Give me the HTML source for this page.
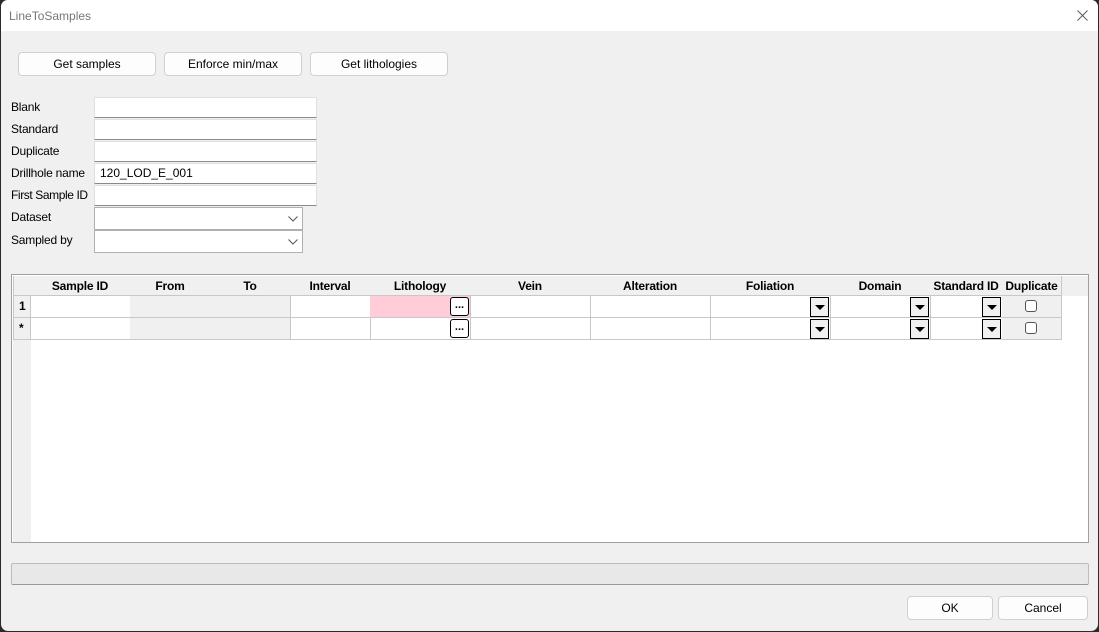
<!DOCTYPE html>
<html><head><meta charset="utf-8"><style>
*{box-sizing:border-box;margin:0;padding:0}
body{width:1099px;height:632px;background:#2b2b2b;font-family:"Liberation Sans",sans-serif;font-size:12px;color:#000;position:relative;overflow:hidden}
.win{position:absolute;left:1px;top:0;width:1097px;height:631px;background:#f0f0f0;border-radius:7px;overflow:hidden}
.title{position:absolute;left:0;top:0;width:100%;height:31px;background:#fff}
.a{position:absolute}
.btn{position:absolute;background:#fdfdfd;border:1px solid #d0d0d0;border-radius:4px;text-align:center;line-height:22px;font-size:12px}
.lbl{position:absolute;left:10px;font-size:12px;letter-spacing:-0.2px}
.inp{position:absolute;left:93px;width:223px;height:21px;background:#fff;border:1px solid #e0e0e0;border-bottom:1px solid #8a8a8a;padding-left:5px;line-height:19px}
.cmb{position:absolute;left:93px;width:209px;height:23px;background:#fff;border:1px solid #b0b0b0}
.cmb svg{position:absolute;right:4px;top:8px}
.c{position:absolute;border-right:1px solid #c8c8c8;border-bottom:1px solid #c8c8c8;height:22px}
.h{position:absolute;top:276px;height:20px;border-right:1px solid #c8c8c8;border-bottom:1px solid #c8c8c8;background:#f0f0f0;font-weight:bold;text-align:center;line-height:20px;font-size:12px;letter-spacing:-0.2px}
.dd{position:absolute;width:19px;height:20px;border:1px solid #000;background:#f0f0f0}
.dd:after{content:"";position:absolute;left:4px;top:7px;border-left:5px solid transparent;border-right:5px solid transparent;border-top:5px solid #000}
.el{position:absolute;width:19px;height:19px;border:1px solid #000;border-radius:3px;background:#fff;font-size:11px;font-weight:bold;text-align:center;line-height:15px}
.cb{position:absolute;width:12px;height:12px;border:1px solid #555;border-radius:3px;background:#fff}
</style></head><body>
<div class="win">
<div class="title"></div>
<div class="a" style="left:8px;top:9px;color:#777;font-size:12px">LineToSamples</div>
<svg class="a" style="left:1076px;top:10px" width="11" height="11"><path d="M0.5 0.5L10.5 10.5M10.5 0.5L0.5 10.5" stroke="#555" stroke-width="0.9"/></svg>

<div class="btn" style="left:17px;top:52px;width:138px;height:24px">Get samples</div>
<div class="btn" style="left:163px;top:52px;width:138px;height:24px">Enforce min/max</div>
<div class="btn" style="left:309px;top:52px;width:138px;height:24px">Get lithologies</div>

<div class="lbl" style="top:100px">Blank</div>
<div class="lbl" style="top:122px">Standard</div>
<div class="lbl" style="top:144px">Duplicate</div>
<div class="lbl" style="top:166px">Drillhole name</div>
<div class="lbl" style="top:188px;letter-spacing:-0.4px">First Sample ID</div>
<div class="lbl" style="top:210px">Dataset</div>
<div class="lbl" style="top:233px">Sampled by</div>
<div class="inp" style="top:97px"></div>
<div class="inp" style="top:119px"></div>
<div class="inp" style="top:141px"></div>
<div class="inp" style="top:163px">120_LOD_E_001</div>
<div class="inp" style="top:185px"></div>
<div class="cmb" style="top:207px"><svg width="10" height="6"><path d="M0.5 0.5L5 5L9.5 0.5" stroke="#555" fill="none"/></svg></div>
<div class="cmb" style="top:230px"><svg width="10" height="6"><path d="M0.5 0.5L5 5L9.5 0.5" stroke="#555" fill="none"/></svg></div>

<div class="a" style="left:10px;top:274px;width:1078px;height:269px;border:1px solid #a0a0a0;background:#fff"></div>
<div class="a" style="left:12px;top:276px;width:18px;height:266px;background:#f0f0f0"></div>
<div class="a" style="left:1060px;top:276px;width:27px;height:20px;background:#f0f0f0"></div>
<div class="h" style="left:12px;width:18px;border-left:1px solid #c8c8c8"></div>
<div class="h" style="left:29px;width:101px">Sample ID</div>
<div class="h" style="left:129px;width:81px">From</div>
<div class="h" style="left:209px;width:81px">To</div>
<div class="h" style="left:289px;width:81px">Interval</div>
<div class="h" style="left:369px;width:101px">Lithology</div>
<div class="h" style="left:469px;width:121px">Vein</div>
<div class="h" style="left:589px;width:121px">Alteration</div>
<div class="h" style="left:709px;width:121px">Foliation</div>
<div class="h" style="left:829px;width:101px">Domain</div>
<div class="h" style="left:929px;width:73px">Standard ID</div>
<div class="h" style="left:1001px;width:60px">Duplicate</div>

<div class="c" style="left:12px;top:296px;width:18px;background:#f0f0f0;border-left:1px solid #c8c8c8;font-weight:bold;padding-left:5px;line-height:21px">1</div>
<div class="c" style="left:12px;top:318px;width:18px;background:#f0f0f0;border-left:1px solid #c8c8c8;font-weight:bold;padding-left:5px;line-height:21px">*</div>

<div class="c" style="left:29px;top:296px;width:101px"></div>
<div class="c" style="left:129px;top:296px;width:81px;background:#f0f0f0"></div>
<div class="c" style="left:209px;top:296px;width:81px;background:#f0f0f0"></div>
<div class="c" style="left:289px;top:296px;width:81px"></div>
<div class="c" style="left:369px;top:296px;width:101px;background:#ffccd8"></div>
<div class="c" style="left:469px;top:296px;width:121px"></div>
<div class="c" style="left:589px;top:296px;width:121px"></div>
<div class="c" style="left:709px;top:296px;width:121px"></div>
<div class="c" style="left:829px;top:296px;width:101px"></div>
<div class="c" style="left:929px;top:296px;width:73px"></div>
<div class="c" style="left:1001px;top:296px;width:60px;background:#f0f0f0"></div>

<div class="c" style="left:29px;top:318px;width:101px"></div>
<div class="c" style="left:129px;top:318px;width:81px;background:#f0f0f0"></div>
<div class="c" style="left:209px;top:318px;width:81px;background:#f0f0f0"></div>
<div class="c" style="left:289px;top:318px;width:81px"></div>
<div class="c" style="left:369px;top:318px;width:101px"></div>
<div class="c" style="left:469px;top:318px;width:121px"></div>
<div class="c" style="left:589px;top:318px;width:121px"></div>
<div class="c" style="left:709px;top:318px;width:121px"></div>
<div class="c" style="left:829px;top:318px;width:101px"></div>
<div class="c" style="left:929px;top:318px;width:73px"></div>
<div class="c" style="left:1001px;top:318px;width:60px;background:#f0f0f0"></div>

<div class="el" style="left:449px;top:297px">...</div>
<div class="el" style="left:449px;top:319px">...</div>
<div class="dd" style="left:809px;top:297px"></div>
<div class="dd" style="left:809px;top:319px"></div>
<div class="dd" style="left:909px;top:297px"></div>
<div class="dd" style="left:909px;top:319px"></div>
<div class="dd" style="left:981px;top:297px"></div>
<div class="dd" style="left:981px;top:319px"></div>
<div class="cb" style="left:1024px;top:300px"></div>
<div class="cb" style="left:1024px;top:322px"></div>

<div class="a" style="left:10px;top:563px;width:1078px;height:22px;border:1px solid #bcbcbc;border-bottom-color:#999;background:#e8e8e8;border-radius:2px"></div>

<div class="btn" style="left:906px;top:596px;width:86px;height:24px">OK</div>
<div class="btn" style="left:997px;top:596px;width:90px;height:24px">Cancel</div>
</div>
</body></html>
